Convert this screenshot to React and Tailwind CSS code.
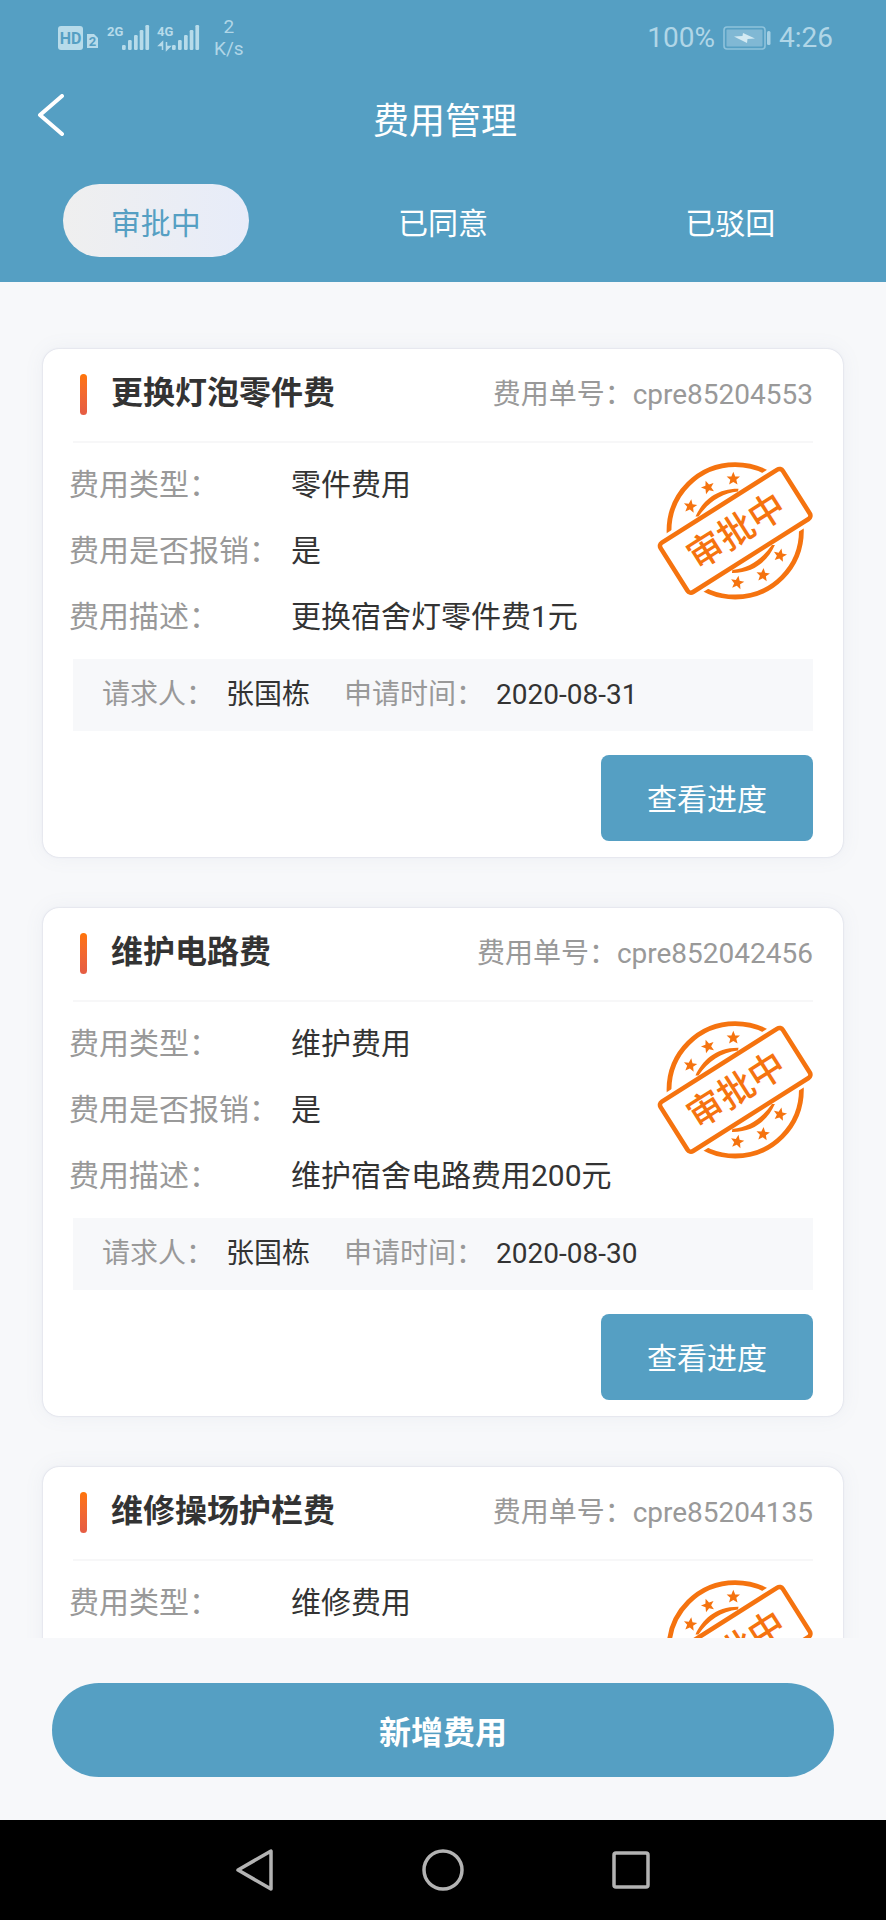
import React, { useState } from 'react';

const tabs = ['审批中', '已同意', '已驳回'];

const expenses = [
  { id: 'cpre85204553', title: '更换灯泡零件费', type: '零件费用', reimburse: '是', desc: '更换宿舍灯零件费1元', person: '张国栋', date: '2020-08-31' },
  { id: 'cpre852042456', title: '维护电路费', type: '维护费用', reimburse: '是', desc: '维护宿舍电路费用200元', person: '张国栋', date: '2020-08-30' },
  { id: 'cpre85204135', title: '维修操场护栏费', type: '维修费用', reimburse: '是', desc: '维修操场护栏费用', person: '张国栋', date: '2020-08-29' },
];

const STAR = 'M0 -7 L1.9 -2.3 L6.7 -2.2 L3 1 L4.2 5.8 L0 3.2 L-4.2 5.8 L-3 1 L-6.7 -2.2 L-1.9 -2.3 Z';
const CRESCENT = 'M40.5 56.5 C47 42 60 28.5 83.5 28.7 L83 31.5 C66 33 53 43 43.5 56.5 Z';

// Stars around the stamp: x, y, rotation
const stars = [
  [35.3, 46.3, 8],
  [53, 27.3, -20],
  [78.3, 18.7, 0],
  [82.3, 122.7, 10],
  [108, 115, 5],
  [125, 95.3, 12],
];

const Stamp = () => (
  <svg viewBox="0 0 160 142" className="mt-[9px] h-[142px] w-[160px] shrink-0" aria-hidden="true">
    <circle cx="80.2" cy="70.8" r="66.2" fill="none" stroke="#f5730f" strokeWidth="4.8" />
    {stars.map(([x, y, r]) => (
      <path key={x} d={STAR} fill="#f5730f" transform={`translate(${x} ${y}) rotate(${r})`} />
    ))}
    <g transform="rotate(-32.3 80.2 70.8)">
      <rect x="2.2" y="36.2" width="156" height="69.2" rx="8" fill="#fff" />
      <rect x="7.9" y="41.6" width="144.6" height="58.4" rx="4" fill="#fff" stroke="#f5730f" strokeWidth="4.6" />
      <text x="81" y="84" textAnchor="middle" fontSize="36" fill="#f5730f" className="font-medium">审批中</text>
    </g>
    <path d={CRESCENT} fill="#f5730f" />
    <path d={CRESCENT} fill="#f5730f" transform="rotate(180 80.2 70.8)" />
  </svg>
);

const SignalBars = ({ x }) => (
  <g fill="#b7dbea">
    <rect x={x} y="45" width="3.7" height="5" rx="1.2" />
    <rect x={x + 6} y="40" width="3.7" height="10" rx="1.2" />
    <rect x={x + 12} y="35" width="3.7" height="15" rx="1.2" />
    <rect x={x + 17.7} y="30" width="3.7" height="20" rx="1.2" />
    <rect x={x + 23.4} y="25" width="3.7" height="25" rx="1.2" />
  </g>
);

const StatusBar = () => (
  <div className="flex h-[74px] items-center justify-between pr-[53px] pl-[58px] text-[28px] text-[#b0d6e7]">
    <div className="flex items-center gap-3.5">
      <svg viewBox="58 0 142 74" className="h-[74px] w-[142px]" aria-hidden="true">
        <rect x="58" y="26" width="25" height="24" rx="3" fill="#b7dbea" />
        <text x="70.5" y="43.5" textAnchor="middle" fontSize="16" fill="#559fc3" className="font-bold">HD</text>
        <path d="M87 34h7l4 4v10H87z" fill="#b7dbea" />
        <text x="92.5" y="46" textAnchor="middle" fontSize="13" fill="#559fc3" className="font-bold">2</text>
        <text x="107" y="36" fontSize="13" fill="#b7dbea" className="font-bold">2G</text>
        <SignalBars x={122} />
        <text x="157" y="36" fontSize="13" fill="#b7dbea" className="font-bold">4G</text>
        <path d="M162.5 50v-8l-3.5 3.500h3.500M166.500 42v8l3.500-3.500h-3.500" fill="#b7dbea" stroke="#b7dbea" strokeWidth="1.5" />
        <SignalBars x={172} />
      </svg>
      <div className="pt-0.5 text-center text-[19px] leading-[22px]">
        <div>2</div>
        <div>K/s</div>
      </div>
    </div>
    <div className="flex items-center gap-2 pt-0.5">
      <span>100%</span>
      <svg viewBox="0 0 48 24" className="h-6 w-12" aria-hidden="true">
        <rect x="1" y="1" width="41" height="22" rx="3" fill="none" stroke="#8fc3dc" strokeWidth="1.6" />
        <rect x="3.5" y="3.5" width="36" height="17" rx="1" fill="#80b8d4" />
        <path d="M11 10.5L19.5 10L20 7L32 12.5L24.5 13L24 17Z" fill="#d3eaf3" />
        <rect x="44" y="5" width="3.5" height="14" rx="1.5" fill="#a5d0e4" />
      </svg>
      <span>4:26</span>
    </div>
  </div>
);

const Row = ({ label, value }) => (
  <div className="flex h-[66px] items-center text-[30px]">
    <dt className="w-[222px] shrink-0 text-[#999999]">{label}：</dt>
    <dd className="text-[#333333]">{value}</dd>
  </div>
);

const ExpenseCard = ({ item }) => (
  <article className="rounded-2xl bg-white pb-4 shadow-[0_0_2px_rgba(120,130,170,0.35),0_0_20px_rgba(120,130,170,0.08)]">
    <div className="mx-[30px] flex items-start border-b-2 border-[#f7f7f8] pt-[25px] pb-[26px] pl-[7px]">
      <span className="h-[41px] w-[7px] rounded-full bg-gradient-to-b from-[#ff7404] to-[#e55c43]" />
      <h2 className="ml-6 text-[32px] leading-[38px] font-bold text-[#333333]">{item.title}</h2>
      <p className="ml-auto text-[28px] leading-[41px] text-[#999999]">费用单号：{item.id}</p>
    </div>

    <div className="mt-2 mr-7 ml-[26px] flex items-start justify-between">
      <dl>
        <Row label="费用类型" value={item.type} />
        <Row label="费用是否报销" value={item.reimburse} />
        <Row label="费用描述" value={item.desc} />
      </dl>
      <Stamp />
    </div>

    <div className="mx-[30px] mt-2.5 flex h-[72px] items-center gap-[34px] bg-[#f7f8fa] px-[29px] text-[28px] text-[#333333]">
      <p className="flex gap-3"><span className="text-[#999999]">请求人：</span>{item.person}</p>
      <p className="flex gap-3"><span className="text-[#999999]">申请时间：</span>{item.date}</p>
    </div>

    <div className="mx-[30px] mt-6 flex justify-end">
      <button className="h-[86px] w-[212px] rounded-lg bg-[#559fc3] pt-0.5 text-[30px] text-white">查看进度</button>
    </div>
  </article>
);

export default function App() {
  const [active, setActive] = useState(0);

  return (
    <div className="flex h-screen flex-col bg-[#f7f8fa] font-['Roboto','Noto_Sans_CJK_SC',sans-serif]">
      <header className="bg-[#559fc3] text-white">
        <StatusBar />
        <div className="grid h-24 grid-cols-[80px_1fr_76px] items-center">
          <button aria-label="返回" className="self-start pt-5 pl-9">
            <svg viewBox="0 0 30 42" className="h-[42px] w-[30px]" fill="none" stroke="#fff" strokeWidth="4" strokeLinecap="round" strokeLinejoin="round">
              <path d="M26 2L4 21l22 19" />
            </svg>
          </button>
          <h1 className="text-center text-[36px]">费用管理</h1>
        </div>
        <nav className="grid grid-cols-3 justify-items-center px-3 pt-3.5 pb-[25px]">
          {tabs.map((tab, i) => (
            <button
              key={tab}
              onClick={() => setActive(i)}
              className={`h-[73px] w-[186px] rounded-full pt-1.5 text-[30px] ${active === i ? 'bg-gradient-to-r from-[#efefef] to-[#e7ecf9] text-[#559fc3]' : 'text-white'}`}
            >
              {tab}
            </button>
          ))}
        </nav>
      </header>

      <main className="min-h-0 flex-1 overflow-hidden px-[43px] pt-[67px]">
        <div className="flex flex-col gap-[51px]">
          {expenses.map(item => <ExpenseCard key={item.id} item={item} />)}
        </div>
      </main>

      <div className="px-[52px] pt-[45px] pb-[43px]">
        <button className="h-[94px] w-full rounded-full bg-[#559fc3] pt-1.5 text-[32px] font-bold text-white">新增费用</button>
      </div>

      {/* System navigation */}
      <div className="flex h-[100px] shrink-0 items-center justify-center gap-36 bg-black">
        <button aria-label="后退">
          <svg viewBox="0 0 44 44" className="size-11" fill="none" stroke="#b3b3b3" strokeWidth="3.5" strokeLinejoin="round">
            <path d="M38 3v38L5 22z" />
          </svg>
        </button>
        <button aria-label="主页">
          <svg viewBox="0 0 44 44" className="size-11" fill="none" stroke="#b3b3b3" strokeWidth="3.5">
            <circle cx="22" cy="22" r="19" />
          </svg>
        </button>
        <button aria-label="最近任务">
          <svg viewBox="0 0 44 44" className="size-11" fill="none" stroke="#b3b3b3" strokeWidth="3.5">
            <rect x="5" y="5" width="34" height="34" rx="2" />
          </svg>
        </button>
      </div>
    </div>
  );
}
